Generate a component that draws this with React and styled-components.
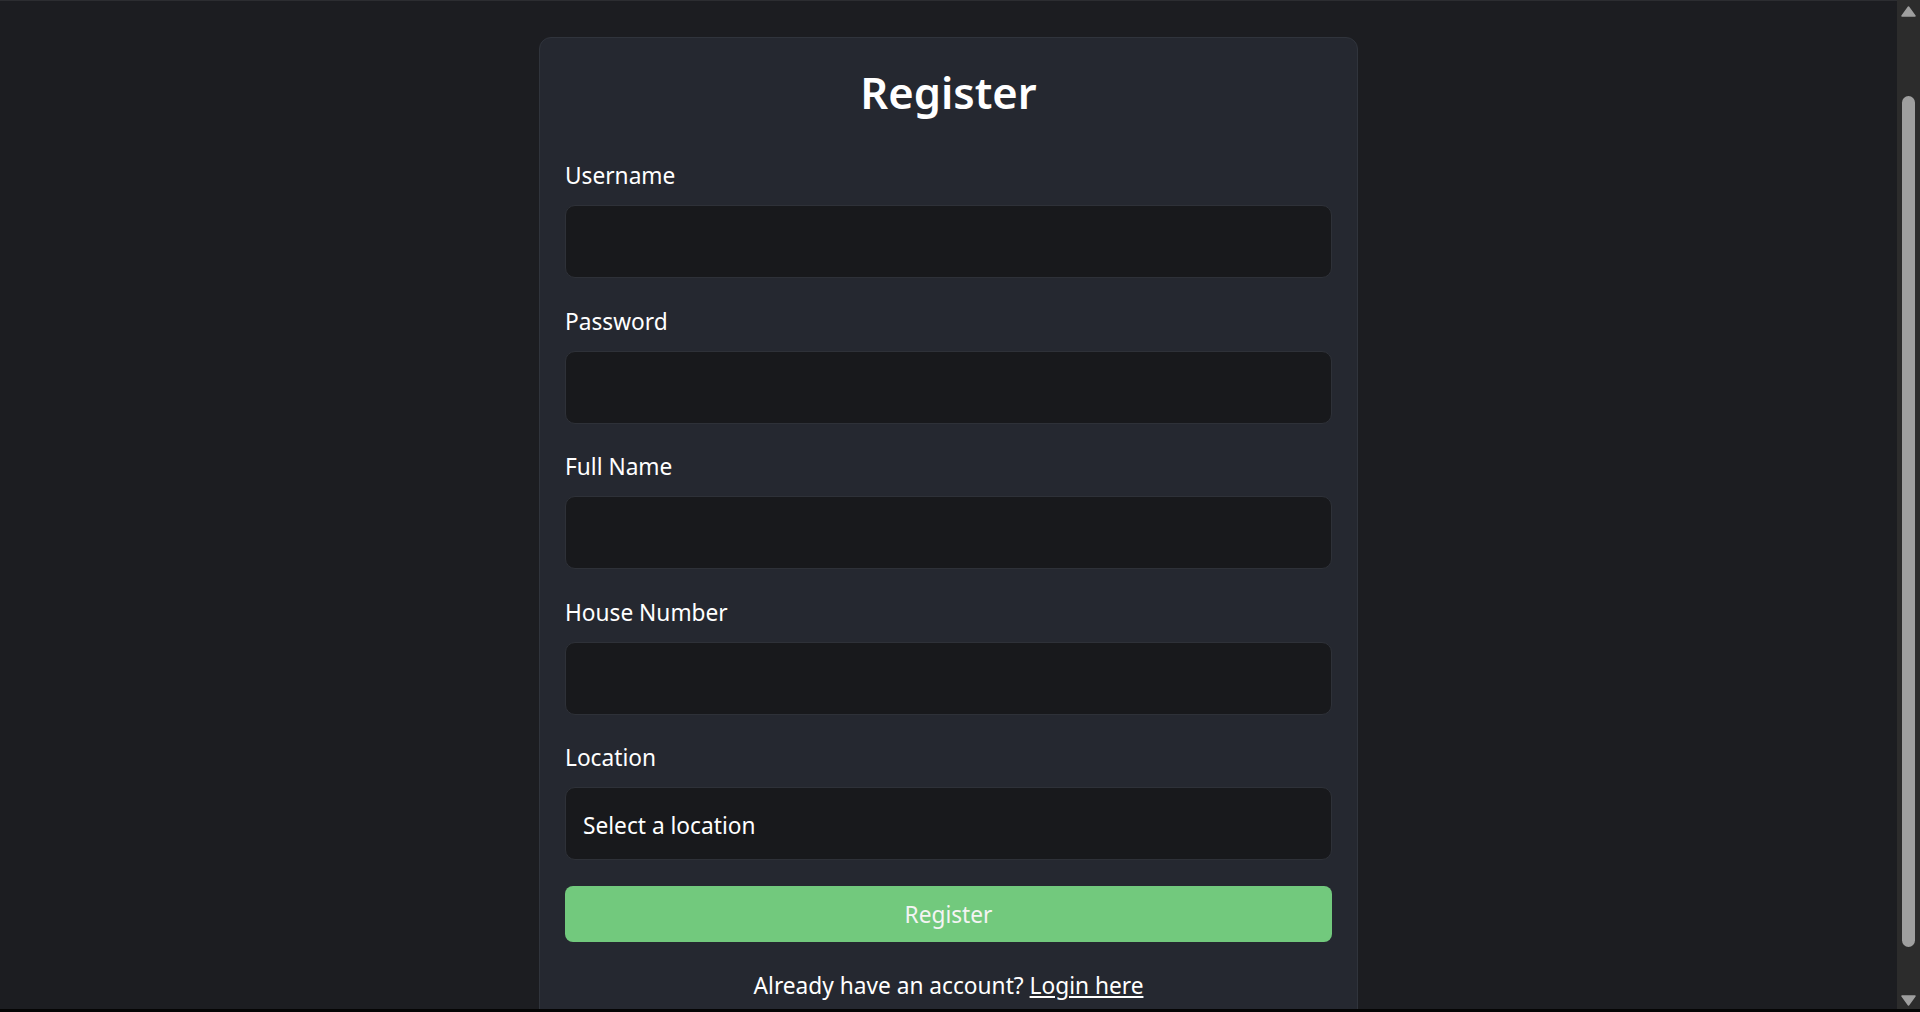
import React from 'react';
import styled, { createGlobalStyle } from 'styled-components';

const GlobalStyle = createGlobalStyle`
  body {
    margin: 0;
    background: #1c1d21;
    color: #ffffff;
    font-family: "Segoe UI", "Noto Sans", "Open Sans", sans-serif;
  }
`;

const Page = styled.div`
  display: flex;
  justify-content: center;
  padding: 37px 23px 60px 0;
`;

const Card = styled.form`
  box-sizing: border-box;
  width: 819px;
  padding: 27px 25px 30px;
  background: #252830;
  border: 1px solid #30343c;
  border-radius: 12px;
`;

const Title = styled.h1`
  margin: 0 0 37px;
  font-size: 43.5px;
  line-height: 55px;
  font-weight: 600;
  text-align: center;
`;

const Field = styled.div`
  display: flex;
  flex-direction: column;
  margin-bottom: 24.5px;
`;

const Label = styled.label`
  font-size: 22.7px;
  line-height: 36px;
  padding-top: 1px;
  margin-bottom: 11px;
`;

const Input = styled.input`
  box-sizing: border-box;
  height: 73px;
  padding: 0 18px;
  background: #18191c;
  border: 1px solid #2e3138;
  border-radius: 10px;
  color: #ffffff;
  font: inherit;
  font-size: 22.7px;
  outline: none;
`;

const Select = styled.select`
  box-sizing: border-box;
  height: 73px;
  padding: 3px 17px 0;
  background: #18191c;
  border: 1px solid #2e3138;
  border-radius: 10px;
  color: #ffffff;
  font: inherit;
  font-size: 22.7px;
  appearance: none;
  outline: none;
`;

const Button = styled.button`
  width: 100%;
  height: 56px;
  margin-top: 1px;
  padding-top: 3px;
  background: #72c97d;
  border: none;
  border-radius: 8px;
  color: #f4f4f4;
  font: inherit;
  font-size: 22.7px;
  cursor: pointer;
`;

const Footer = styled.p`
  margin: 26px 0 0;
  font-size: 22.7px;
  line-height: 36px;
  text-align: center;
`;

const LoginLink = styled.a`
  color: #ffffff;
  text-decoration: underline;
`;

/* browser scrollbar and window edges as they show in the screenshot */
const Scrollbar = styled.div`
  position: fixed;
  top: 0;
  right: 0;
  bottom: 3px;
  width: 23px;
  background: #2c2c2c;
  display: flex;
  flex-direction: column;
  align-items: center;
  padding: 6px 0 3px;
  box-sizing: border-box;
`;

const Thumb = styled.div`
  width: 13px;
  margin: 79px 0 auto;
  height: 851px;
  border-radius: 7px;
  background: #9f9f9f;
`;

const TopEdge = styled.div`
  position: fixed;
  top: 0;
  left: 0;
  right: 0;
  height: 1px;
  background: #2c2d31;
`;

const BottomEdge = styled.div`
  position: fixed;
  bottom: 0;
  left: 0;
  right: 0;
  height: 3px;
  background: #050505;
`;

const Arrow = ({ down }) => (
  <svg width="15" height="11" viewBox="0 0 15 11">
    <path
      d={down ? 'M1 1 H14 L7.5 10 Z' : 'M7.5 1 L14 10 H1 Z'}
      fill="#9f9f9f"
      stroke="#9f9f9f"
      strokeLinejoin="round"
      strokeWidth="1.5"
    />
  </svg>
);

const fields = [
  { id: 'username', label: 'Username', type: 'text' },
  { id: 'password', label: 'Password', type: 'password' },
  { id: 'fullName', label: 'Full Name', type: 'text' },
  { id: 'houseNumber', label: 'House Number', type: 'text' },
];

export default function App() {
  return (
    <>
      <GlobalStyle />
      <Page>
        <Card onSubmit={(e) => e.preventDefault()}>
          <Title>Register</Title>
          {fields.map((f) => (
            <Field key={f.id}>
              <Label htmlFor={f.id}>{f.label}</Label>
              <Input id={f.id} type={f.type} />
            </Field>
          ))}
          <Field>
            <Label htmlFor="location">Location</Label>
            <Select id="location" defaultValue="">
              <option value="">Select a location</option>
            </Select>
          </Field>
          <Button type="submit">Register</Button>
          <Footer>
            Already have an account? <LoginLink href="#">Login here</LoginLink>
          </Footer>
        </Card>
      </Page>
      <TopEdge />
      <Scrollbar>
        <Arrow />
        <Thumb />
        <Arrow down />
      </Scrollbar>
      <BottomEdge />
    </>
  );
}
